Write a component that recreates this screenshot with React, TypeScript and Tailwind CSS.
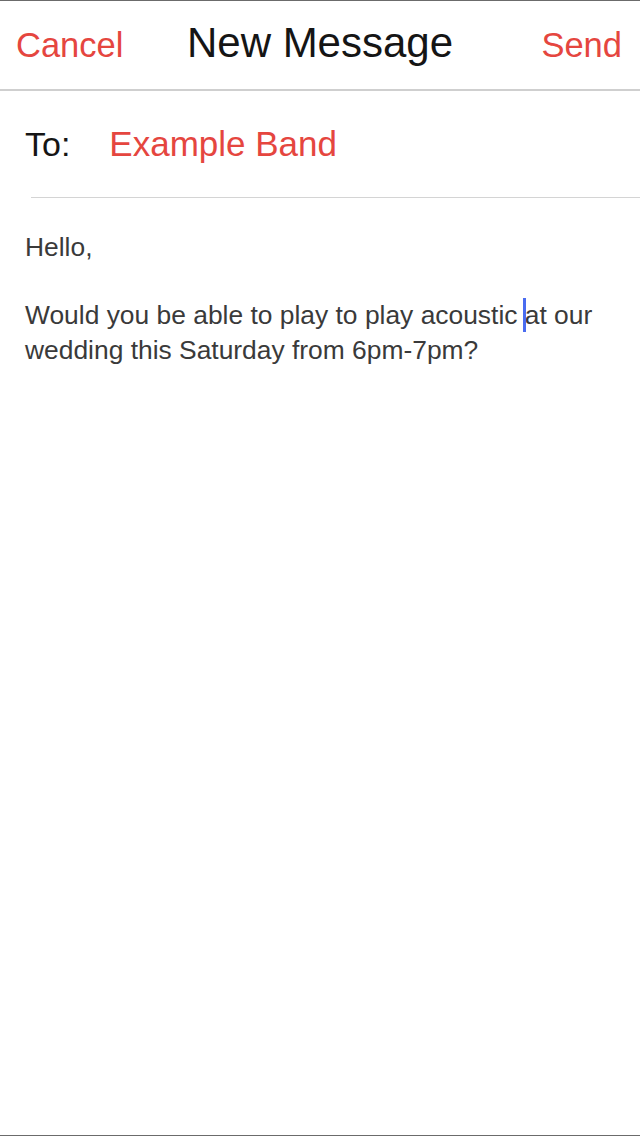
import React from 'react';

const font = { fontFamily: '"Liberation Sans", Arial, sans-serif' };

function Header() {
  return (
    <div className="relative flex h-[88px] items-baseline justify-between pl-4 pr-[18px] pt-[21px] leading-none">
      <button className="text-[34.5px] text-[#e5463f]">Cancel</button>
      <h1 className="absolute left-1/2 top-[21px] -translate-x-1/2 text-[42px] font-normal text-[#151515]">
        New Message
      </h1>
      <span className="text-[42px] opacity-0">N</span>
      <button className="ml-auto text-[34.5px] text-[#e5463f]">Send</button>
    </div>
  );
}

function ToField() {
  return (
    <div className="flex h-[106px] items-baseline gap-[39px] pl-[25px] pt-[35px] leading-none">
      <span className="text-[34px] text-[#151515]">To:</span>
      <span className="text-[35px] text-[#e5463f]">Example Band</span>
    </div>
  );
}

function Body() {
  return (
    <div className="relative px-[25px] pt-[32px] text-[26.4px] leading-[35px] text-[#3a3a3a]">
      <p>Hello,</p>
      <div className="h-[33px]" />
      <p>
        Would you be able to play to play acoustic at our wedding this Saturday from 6pm-7pm?
      </p>
      {/* text cursor */}
      <span className="absolute left-[523px] top-[100px] h-[34px] w-[3px] bg-[#4a6cf0]" />
    </div>
  );
}

export default function App() {
  return (
    <div
      className="flex h-[1136px] w-[640px] flex-col overflow-hidden border-y border-[#6b6b6b] bg-white"
      style={font}
    >
      <Header />
      <div className="h-[2px] bg-[#cfcfcf]" />
      <ToField />
      <div className="ml-[31px] h-px bg-[#d4d4d4]" />
      <Body />
    </div>
  );
}
